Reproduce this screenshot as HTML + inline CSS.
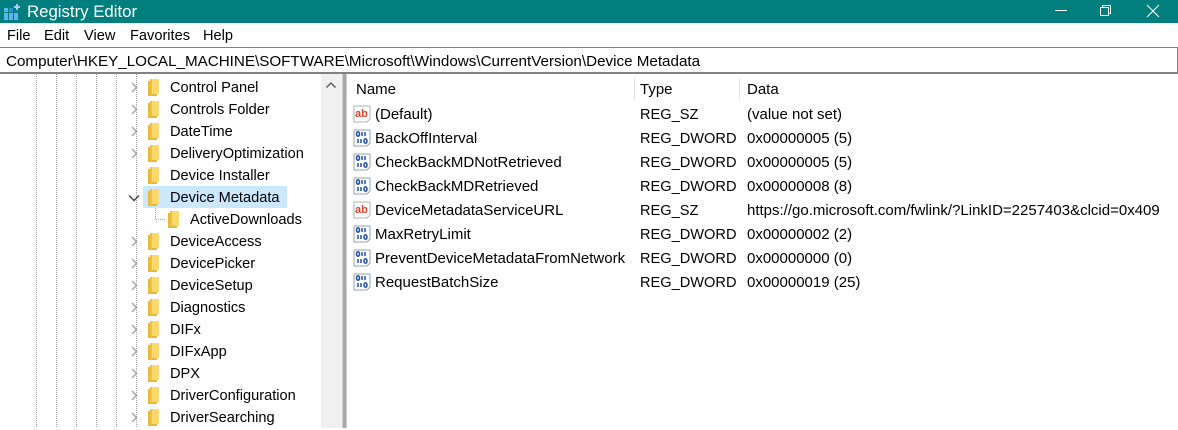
<!DOCTYPE html>
<html><head><style>
*{margin:0;padding:0;box-sizing:border-box}
body{width:1178px;height:428px;overflow:hidden;background:#fff;font-family:"Liberation Sans",sans-serif;font-size:14.6px;color:#000;position:relative}
.a{position:absolute;white-space:nowrap}
.t{line-height:24px;height:22px}
.dl{position:absolute;top:74px;height:354px;width:1px;background-image:linear-gradient(#a0a0a0 50%,transparent 50%);background-size:1px 2px}
.fold{position:absolute;width:13px;height:17px}
.r{position:absolute;height:24px;line-height:26px;white-space:nowrap;font-size:15px}
</style></head><body>
<div class="a" style="left:0;top:0;width:1178px;height:23px;background:#017e7e"></div>
<svg class="a" style="left:3px;top:3px" width="18" height="18"><g fill="#5fb4ef"><rect x="1" y="5" width="4" height="4"/><rect x="6" y="5" width="4" height="4" fill="#2a8fe0"/><rect x="1" y="10" width="4" height="4"/><rect x="6" y="10" width="4" height="4"/><rect x="11" y="10" width="4" height="4"/><rect x="1" y="14" width="4" height="3"/><rect x="6" y="14" width="4" height="3"/><rect x="11" y="14" width="4" height="3"/></g><path d="M14 1v6M11 4h6" stroke="#9fd3f5" stroke-width="2"/></svg>
<div class="a" style="left:27px;top:1px;color:#fff;font-size:16.8px;line-height:21px">Registry Editor</div>
<div class="a" style="left:1055px;top:10px;width:12px;height:1px;background:#fff"></div>
<svg class="a" style="left:1099px;top:4px" width="14" height="14"><rect x="1.5" y="3.5" width="8" height="8" fill="none" stroke="#fff"/><path d="M3.5 3.5V1.5h8v8h-2" fill="none" stroke="#fff"/></svg>
<svg class="a" style="left:1146px;top:4px" width="14" height="14"><path d="M1 1l12 12M13 1L1 13" stroke="#fff" stroke-width="1.1"/></svg>
<div class="a" style="left:7px;top:27px;line-height:18px">File</div>
<div class="a" style="left:44px;top:27px;line-height:18px">Edit</div>
<div class="a" style="left:84px;top:27px;line-height:18px">View</div>
<div class="a" style="left:130px;top:27px;line-height:18px">Favorites</div>
<div class="a" style="left:203px;top:27px;line-height:18px">Help</div>
<div class="a" style="left:0;top:47px;width:1178px;height:27px;border:1px solid #828282;border-left:none;border-bottom:2px solid #828282"></div>
<div class="a" style="left:6px;top:52px;line-height:20px;font-size:15.2px">Computer\HKEY_LOCAL_MACHINE\SOFTWARE\Microsoft\Windows\CurrentVersion\Device Metadata</div>
<div class="dl" style="left:36px"></div><div class="dl" style="left:56px"></div><div class="dl" style="left:76px"></div><div class="dl" style="left:96px"></div><div class="dl" style="left:116px"></div><div class="dl" style="left:136px"></div>
<div class="a" style="left:155px;top:208px;width:1px;height:11px;background-image:linear-gradient(#a0a0a0 50%,transparent 50%);background-size:1px 2px"></div>
<div class="a" style="left:156px;top:219px;width:10px;height:1px;background-image:linear-gradient(90deg,#a0a0a0 50%,transparent 50%);background-size:2px 1px"></div>
<div class="a" style="left:143px;top:186px;width:144px;height:22px;background:#cce8ff"></div>
<div id="tree"></div>
<div class="a" style="left:321px;top:74px;width:21px;height:354px;background:#f0f0f0"></div>
<svg class="a" style="left:325px;top:80px" width="12" height="10"><path d="M1.5 7.5l4.5-4.5 4.5 4.5" fill="none" stroke="#606060" stroke-width="1.5"/></svg>
<div class="a" style="left:342px;top:74px;width:5px;height:354px;background:#a8a8a8;border-left:1px solid #d0d0d0;border-right:1px solid #d0d0d0"></div>
<div class="a" style="left:356px;top:80px;line-height:20px;font-size:15px">Name</div>
<div class="a" style="left:634px;top:78px;width:1px;height:22px;background:#e5e5e5"></div>
<div class="a" style="left:640px;top:80px;line-height:20px;font-size:15px">Type</div>
<div class="a" style="left:739px;top:78px;width:1px;height:22px;background:#e5e5e5"></div>
<div class="a" style="left:747px;top:80px;line-height:20px;font-size:15px">Data</div>
<div id="list"></div>
<script>
var T=[["Control Panel",1],["Controls Folder",1],["DateTime",1],["DeliveryOptimization",1],["Device Installer",0],["Device Metadata",2],["ActiveDownloads",3],["DeviceAccess",1],["DevicePicker",1],["DeviceSetup",1],["Diagnostics",1],["DIFx",1],["DIFxApp",1],["DPX",1],["DriverConfiguration",1],["DriverSearching",1]];
var h="";
T.forEach(function(e,i){var y=76+i*22,fx=e[1]==3?168:148,tx=e[1]==3?190:170;
if(e[1]==1)h+='<svg class="a" style="left:129px;top:'+(y+6)+'px" width="10" height="11"><path d="M3 1l4.5 4.5L3 10" fill="none" stroke="#a0a0a0" stroke-width="1.3"/></svg>';
if(e[1]==2)h+='<svg class="a" style="left:128px;top:'+(y+7)+'px" width="12" height="10"><path d="M1 2.5l5 5 5-5" fill="none" stroke="#404040" stroke-width="1.4"/></svg>';
h+='<svg class="fold" style="left:'+fx+'px;top:'+(y+3)+'px" width="13" height="17"><path d="M0 2h9v15H0z" fill="#e8b83a"/><path d="M2 0h9v15H2z" fill="#fcd96a"/><path d="M2 0h2v16H2z" fill="#f0c040"/></svg>';
h+='<div class="a t" style="left:'+tx+'px;top:'+y+'px">'+e[0]+'</div>';});
document.getElementById("tree").outerHTML=h;
var L=[["(Default)","REG_SZ","(value not set)"],["BackOffInterval","REG_DWORD","0x00000005 (5)"],["CheckBackMDNotRetrieved","REG_DWORD","0x00000005 (5)"],["CheckBackMDRetrieved","REG_DWORD","0x00000008 (8)"],["DeviceMetadataServiceURL","REG_SZ","https://go.microsoft.com/fwlink/?LinkID=2257403&amp;clcid=0x409"],["MaxRetryLimit","REG_DWORD","0x00000002 (2)"],["PreventDeviceMetadataFromNetwork","REG_DWORD","0x00000000 (0)"],["RequestBatchSize","REG_DWORD","0x00000019 (25)"]];
h="";
L.forEach(function(e,i){var y=102+i*24;
if(e[1]=="REG_SZ")h+='<svg class="a" style="left:353px;top:'+(y+3)+'px" width="18" height="18"><path d="M1 1h16v13l-3 3H1z" fill="#fff" stroke="#b0b0b0"/><text x="2" y="12" font-family="Liberation Sans" font-weight="bold" font-size="11" fill="#d9442a">ab</text></svg>';
else h+='<svg class="a" style="left:353px;top:'+(y+3)+'px" width="18" height="18"><path d="M1 1h16v13l-3 3H1z" fill="#fff" stroke="#9aa0b0"/><g fill="none" stroke="#1f4fa8" stroke-width="1.5"><ellipse cx="5" cy="5" rx="1.5" ry="2.2"/><path d="M9 3v4"/><path d="M12 3v4"/><path d="M5 10v4"/><path d="M8 10v4"/><ellipse cx="12.5" cy="12" rx="1.5" ry="2.2"/></g></svg>';
h+='<div class="r" style="left:375px;top:'+y+'px">'+e[0]+'</div><div class="r" style="left:640px;top:'+y+'px;font-size:14.6px">'+e[1]+'</div><div class="r" style="left:747px;top:'+y+'px">'+e[2]+'</div>';});
document.getElementById("list").outerHTML=h;
</script>
</body></html>
